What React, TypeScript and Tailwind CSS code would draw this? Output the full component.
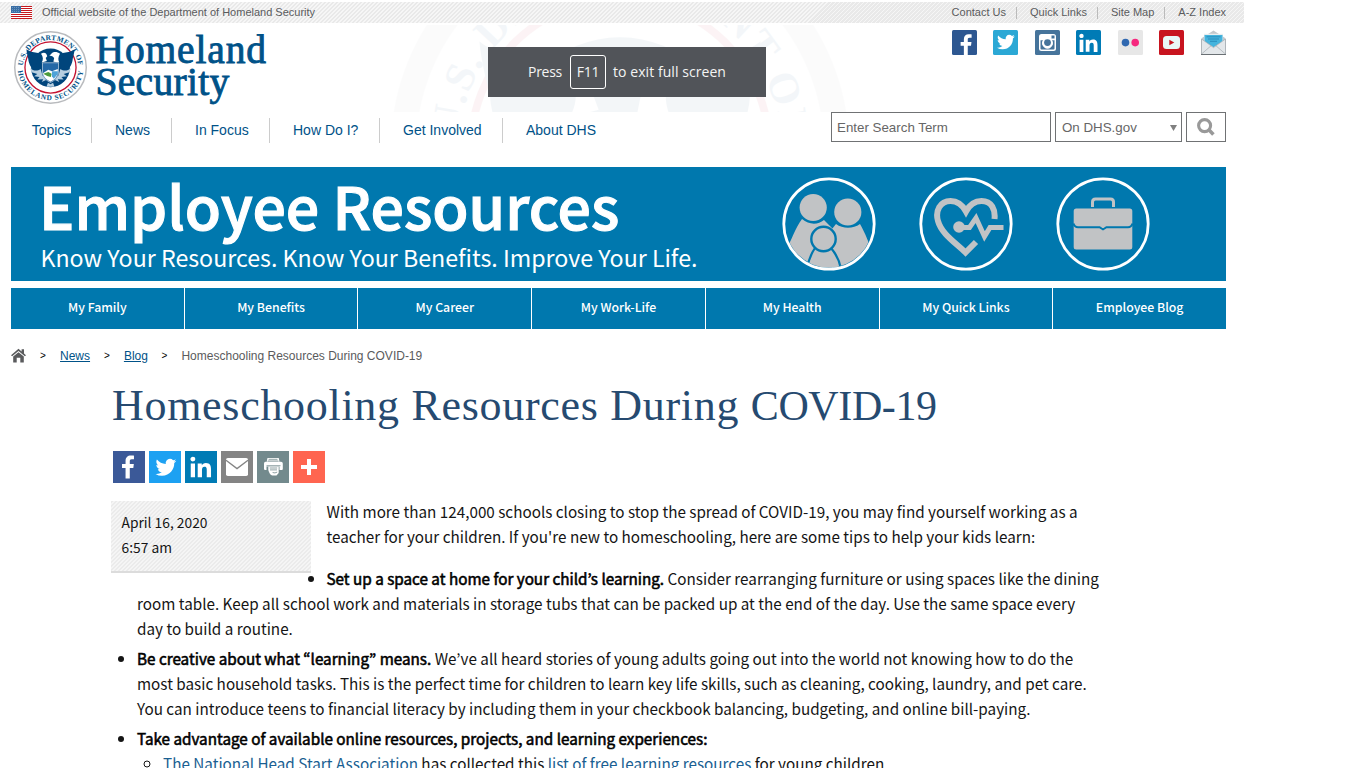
import type { ReactNode } from 'react';

function Seal({ id, ring, inner, className }: { id: string; ring: number; inner: number; className: string }) {
  return (
    <svg viewBox="-100 -100 200 200" className={className} aria-hidden="true">
      <defs>
        <path id={id + 't'} d="M-75.5 -5 A75.7 75.7 0 0 1 75.5 -5" />
        <path id={id + 'b'} d="M-89.5 9 A90 90 0 0 0 89.5 9" />
      </defs>
      <circle r={100 - ring / 2} fill="#fff" stroke="#b9bbbe" strokeWidth={ring} />
      <g transform={`scale(${inner})`}>
        <g fill="#005288" fontFamily="Liberation Serif, serif" fontWeight="700" fontSize="20">
          <text>
            <textPath href={'#' + id + 't'} textLength="226">U.S. DEPARTMENT OF</textPath>
          </text>
          <text>
            <textPath href={'#' + id + 'b'} textLength="262">HOMELAND SECURITY</textPath>
          </text>
        </g>
        <circle r="70" fill="#fff" stroke="#c41230" strokeWidth="3.6" />
        <circle cy="1" r="53" fill="#00457c" />
        <path d="M-66 -50 C-54 -41 -44 -42 -34 -40 L-40 12 C-52 4 -60 -10 -61 -24 C-63 -33 -65 -40 -66 -50Z M66 -50 C54 -41 44 -42 34 -40 L40 12 C52 4 60 -10 61 -24 C63 -33 65 -40 66 -50Z" fill="#00457c" />
        <path d="M-26 -38 C-16 -44 -10 -38 -9 -31 L-13 -26 L-10 -18 L-24 -14 C-19 -22 -20 -30 -26 -38Z M26 -38 C18 -44 6 -44 2 -37 L-3 -33 L5 -31 L10 -26 L8 -16 L24 -14 C20 -22 21 -30 26 -38Z" fill="#fff" />
        <path d="M-56 2 C-46 10 -36 10 -27 4 L-22 22 L-12 34 L-24 40 L-20 32 L-36 33 L-30 26 L-45 24 L-36 18 L-52 13Z M56 2 C46 10 36 10 27 4 L22 22 L12 34 L24 40 L20 32 L36 33 L30 26 L45 24 L36 18 L52 13Z" fill="#b7cfe0" />
        <path d="M-7 42 L0 46 L7 42 L11 53 H-11Z" fill="#b7cfe0" />
        <path d="M-22 -13 H22 V14 C21 29 9 37 0 41 C-9 37 -21 29 -22 14Z" fill="#2468a6" stroke="#fff" strokeWidth="1.5" />
        <path d="M-21 16 L-6 6 L4 10 L20 4 V14 C18 28 9 35 0 39 C-9 35 -18 28 -21 16Z" fill="#fff" />
        <path d="M-20 17 L-6 12 L3 17 L1 26 L-9 23Z" fill="#4c9b3b" />
        <path d="M4 10 H20 V18 L9 31 L4 24Z" fill="#4ea3d8" />
      </g>
    </svg>
  );
}

function Flag() {
  return (
    <svg viewBox="0 0 21 13" className="h-[13px] w-[21px]" shapeRendering="crispEdges" aria-hidden="true">
      <rect width="21" height="13" fill="#fff" />
      {[0, 2, 4, 6, 8, 10, 12].map((y) => (
        <rect key={y} y={y} width="21" height="1" fill="#c5161d" />
      ))}
      <rect width="10" height="7" fill="#3a6ea5" />
      <path d="M1 1.5h8M1 3.5h8M1 5.5h8" stroke="#6f97bd" strokeDasharray="1 1" />
    </svg>
  );
}

const F_PATH = 'M17.78 27.5V17.008h3.522l.527-4.09h-4.05v-2.61c0-1.182.33-1.99 2.023-1.99h2.166V4.66c-.375-.05-1.66-.16-3.155-.16-3.123 0-5.26 1.905-5.26 5.405v3.016h-3.53v4.09h3.53V27.5h4.223z';
const T_PATH = 'M28 8.557a9.913 9.913 0 0 1-2.828.775 4.93 4.93 0 0 0 2.166-2.725 9.738 9.738 0 0 1-3.13 1.194 4.92 4.92 0 0 0-3.593-1.55 4.924 4.924 0 0 0-4.794 6.049c-4.09-.21-7.72-2.17-10.15-5.15a4.942 4.942 0 0 0-.665 2.477c0 1.71.87 3.214 2.19 4.1a4.968 4.968 0 0 1-2.23-.616v.06c0 2.39 1.7 4.38 3.952 4.83-.414.115-.85.174-1.297.174-.318 0-.626-.03-.928-.086a4.935 4.935 0 0 0 4.6 3.42 9.893 9.893 0 0 1-6.114 2.107c-.398 0-.79-.023-1.175-.068a13.953 13.953 0 0 0 7.55 2.213c9.056 0 14.01-7.507 14.01-14.013 0-.213-.005-.426-.015-.637.96-.695 1.795-1.56 2.455-2.55z';
const IN_PATH = 'M6.227 12.61h4.19v13.48h-4.19V12.61zm2.095-6.7a2.43 2.43 0 0 1 0 4.86c-1.344 0-2.428-1.09-2.428-2.43s1.084-2.43 2.428-2.43m4.72 6.7h4.02v1.84h.058c.56-1.058 1.927-2.176 3.965-2.176 4.238 0 5.02 2.792 5.02 6.42v7.395h-4.183v-6.56c0-1.564-.03-3.574-2.178-3.574-2.18 0-2.514 1.7-2.514 3.46v6.668h-4.187V12.61z';

const social: { name: string; bg: string; art: ReactNode }[] = [
  { name: 'Facebook', bg: '#2d5791', art: <path transform="translate(-.6 .2) scale(.92)" d={F_PATH} fill="#fff" /> },
  { name: 'Twitter', bg: '#2ba8d5', art: <path transform="translate(1 .2) scale(.74)" d={T_PATH} fill="#fff" /> },
  {
    name: 'Instagram',
    bg: '#46749b',
    art: (
      <>
        <rect x="4" y="4" width="17" height="17" rx="2.5" fill="#fff" />
        <rect x="16.5" y="5.5" width="3" height="3" fill="#46749b" />
        <path d="M5.5 10.2h2.6a5.3 5.3 0 1 0 8.8 0h2.6v8.3a1 1 0 0 1-1 1h-12a1 1 0 0 1-1-1z" fill="#46749b" />
        <circle cx="12.5" cy="12.6" r="5.2" fill="#fff" />
        <circle cx="12.5" cy="12.6" r="3.4" fill="#46749b" />
      </>
    ),
  },
  { name: 'LinkedIn', bg: '#007bb6', art: <path transform="translate(-2 -1.6) scale(.9)" d={IN_PATH} fill="#fff" /> },
  {
    name: 'Flickr',
    bg: '#e7e7e7',
    art: (
      <>
        <circle cx="7.5" cy="12.6" r="3.8" fill="#3068b0" />
        <circle cx="17.2" cy="12.6" r="3.8" fill="#f6287e" />
      </>
    ),
  },
  {
    name: 'YouTube',
    bg: '#c8141f',
    art: (
      <>
        <rect x="4" y="6" width="17" height="13" rx="3.5" fill="#e9f6f6" />
        <path d="M10.3 9.8v5.4l5-2.7z" fill="#c8141f" />
      </>
    ),
  },
];

function MailIcon() {
  return (
    <svg viewBox="0 0 25 25" className="h-[25px] w-[25px]" aria-hidden="true">
      <path d="M.5 8.2 L12.5 .4 L24.5 8.2 V24.5 H.5Z" fill="#c3c8cc" />
      <path d="M3 3.8 H22 V13 H3Z" fill="#e9edef" />
      <path d="M3.5 5 H21.5 V11.5 L12.5 17.2 L3.5 11.5Z" fill="#45b4dd" />
      <path d="M5.5 6.8h14M7 9h11M9 11.3h7" stroke="#2383b4" strokeWidth=".8" />
      <path d="M.5 9 L12.5 17.6 L24.5 9 V24.2 H.5Z" fill="#e3e7ea" />
      <path d="M.8 23.8 L10 15.8 M24.2 23.8 L15 15.8 M.8 9.2 L12.5 17.6 L24.2 9.2" stroke="#a4abb0" strokeWidth=".7" fill="none" />
      <path d="M.4 9v15.4M24.6 9v15.4" stroke="#9aa2a8" strokeWidth=".8" />
      <path d="M0 24.5h25" stroke="#6a7074" />
    </svg>
  );
}

const share: { name: string; bg: string; art: ReactNode }[] = [
  { name: 'Facebook', bg: '#3b5998', art: <path transform="translate(-1 0)" d={F_PATH} fill="#fff" /> },
  { name: 'Twitter', bg: '#1da1f2', art: <path transform="translate(3 2.4) scale(.87)" d={T_PATH} fill="#fff" /> },
  { name: 'LinkedIn', bg: '#007bb5', art: <path transform="translate(-.6 -.4) scale(1.02)" d={IN_PATH} fill="#fff" /> },
  {
    name: 'Email',
    bg: '#848484',
    art: (
      <>
        <rect x="5" y="7" width="22" height="18" rx="1.8" fill="#fff" />
        <path d="M5 9.2 L16 17.6 L27 9.2" stroke="#848484" strokeWidth="1.3" fill="none" />
      </>
    ),
  },
  {
    name: 'Print',
    bg: '#738a8d',
    art: (
      <>
        <path d="M10.5 7h11.2l.8 3.6h-12.8z M7 12.4q0-1.6 1.6-1.6h15.4q1.8 0 1.8 1.6v5.6q0 1-1 1h-2.3v-3.4h-13v3.4H8.2q-1.2 0-1.2-1z" fill="#fff" />
        <path d="M11.6 8.3h8.9M10.8 10h10.6" stroke="#738a8d" strokeWidth=".8" />
        <path d="M11.3 15.5h10.4v6.4l-2.2 2.6h-4.2q-2.6-.3-4-5.4z" fill="#fff" />
        <path d="M9.5 14.7h14M12.8 17h7.4M13 18.9h7M15.6 21.5q2.4 1 4.6-.4" stroke="#738a8d" strokeWidth=".8" fill="none" />
      </>
    ),
  },
  { name: 'More', bg: '#ff6550', art: <path d="M14 8h4v6h6v4h-6v6h-4v-6H8v-4h6z" fill="#fff" /> },
];

function FamilyIcon() {
  return (
    <svg viewBox="-47 -47 94 94" className="h-[94px] w-[94px]" aria-hidden="true">
      <defs>
        <clipPath id="fam">
          <circle r="43.5" />
        </clipPath>
      </defs>
      <g clipPath="url(#fam)" fill="#c1c3c5">
        <path d="M-27 -5 C-20 1 -11 1 -5 -4 L4 5 V50 H-45 V30 C-38 18 -34 4 -27 -5Z" />
        <path d="M7 0 C14 5 24 5 31 0 C36 9 42 22 44 34 V50 H3 V5Z" />
        <path d="M-22 46 C-21 37 -18 30 -14 24 H2 C7 30 11 37 12 46Z" stroke="#0078ae" strokeWidth="2.2" />
      </g>
      <g fill="#c1c3c5">
        <circle cx="-15.8" cy="-16.5" r="13.6" />
        <circle cx="18.8" cy="-12" r="13.6" />
        <circle cx="-5.5" cy="15" r="12.2" stroke="#0078ae" strokeWidth="2.4" />
      </g>
      <circle r="45.2" fill="none" stroke="#fff" strokeWidth="2.8" />
    </svg>
  );
}

function HeartIcon() {
  return (
    <svg viewBox="-47 -47 94 94" className="h-[94px] w-[94px]" aria-hidden="true">
      <g fill="none" stroke="#c1c3c5" strokeWidth="6">
        <path d="M28.5 -5 C29.5 -14 26 -23 15.5 -23 C8 -23 3.5 -19 0 -12.5 C-3.5 -19 -8 -23 -15.5 -23 C-26 -23 -31 -13 -28 -3 C-24.5 10 -10 19 -.5 28.5 L10 18" />
        <path d="M-7 3.5 H3.5 L10 -6 L18.5 12.5 L24 3.5 H37.5" strokeWidth="5" />
      </g>
      <circle cx="-7" cy="3" r="5.8" fill="#c1c3c5" />
      <circle r="45.2" fill="none" stroke="#fff" strokeWidth="2.8" />
    </svg>
  );
}

function BriefcaseIcon() {
  return (
    <svg viewBox="-47 -47 94 94" className="h-[94px] w-[94px]" aria-hidden="true">
      <path d="M-10.5 -17 V-22 Q-10.5 -25 -7.5 -25 H7.5 Q10.5 -25 10.5 -22 V-17" fill="none" stroke="#c1c3c5" strokeWidth="3" />
      <rect x="-29.3" y="-15.5" width="58.6" height="41" rx="2.5" fill="#c1c3c5" />
      <path d="M-29.5 -.5 Q-28.5 3.2 -25 3.2 H-3.5 L0 5.4 L3.5 3.2 H25 Q28.5 3.2 29.5 -.5" fill="none" stroke="#0078ae" strokeWidth="2" />
      <path d="M-2 2.6h4L0 4.2z" fill="#c1c3c5" />
      <circle r="45.2" fill="none" stroke="#fff" strokeWidth="2.8" />
    </svg>
  );
}

function Strong({ children }: { children: ReactNode }) {
  return <strong className="font-normal text-black [-webkit-text-stroke:0.55px_#000]">{children}</strong>;
}

const STRIPE = 'bg-[repeating-linear-gradient(135deg,#e9e9e9_0px,#e9e9e9_1.8px,#f6f6f6_1.8px,#f6f6f6_2.83px)]';
const STRIPE_SOFT = 'bg-[repeating-linear-gradient(135deg,#ebebeb_0px,#ebebeb_1.6px,#f5f5f5_1.6px,#f5f5f5_2.83px)]';
const NAV_ITEM = 'flex h-full items-center border-r border-[#ccc] pl-[23px]';
const TAB = 'bg-[#0078ae] text-center';

export default function App() {
  return (
    <div className="h-[768px] w-[1366px] overflow-hidden whitespace-nowrap bg-white font-['Liberation_Sans',Arial,sans-serif] text-black">
      <div className="relative w-[1244px] pt-[2px]">
        <div className={'flex h-[21px] items-center justify-between pl-[11px] pr-[18px] text-[11px] text-[#5a5b5d] ' + STRIPE}>
          <div className="flex items-center gap-[10px]">
            <Flag />
            <span>Official website of the Department of Homeland Security</span>
          </div>
          <div className="flex items-center">
            <span>Contact Us</span>
            <span className="ml-[10px] mr-[13px] h-3 w-px bg-[#bbb]" />
            <span>Quick Links</span>
            <span className="ml-[10px] mr-[13px] h-3 w-px bg-[#bbb]" />
            <span>Site Map</span>
            <span className="ml-[10px] mr-[13px] h-3 w-px bg-[#bbb]" />
            <span>A-Z Index</span>
          </div>
        </div>
        <div className="absolute left-[391px] top-[25px] h-[87px] w-[458px] overflow-hidden opacity-[0.045]">
          <Seal id="wm" ring={11} inner={0.93} className="-mt-[106px] h-[458px] w-[458px]" />
        </div>

        <header className="relative">
          <div className="flex h-[89px] justify-between pl-[13.5px] pr-[18px]">
            <div className="flex">
              <Seal id="lg" ring={4} inner={1} className="mt-[7.5px] h-[73px] w-[73px]" />
              <div className="ml-[9px] mt-[11px] font-['Liberation_Serif',serif] text-[39.5px] leading-[32px] text-[#005288] [-webkit-text-stroke:0.9px_#005288]">
                <div className="tracking-[0.85px]">Homeland</div>
                <div className="tracking-[0.3px]">Security</div>
              </div>
            </div>
            <div className="mt-[7px] flex gap-[16.55px]">
              {social.map((s) => (
                <svg key={s.name} viewBox="0 0 25 25" className="h-[25px] w-[25px]" role="img" aria-label={s.name}>
                  <rect width="25" height="25" rx="1.5" fill={s.bg} />
                  {s.art}
                </svg>
              ))}
              <MailIcon />
            </div>
          </div>
          <div className="flex h-8 justify-between pl-[11px] pr-[18px]">
            <nav className="mt-[6px] flex h-[25px] items-center text-[14px] text-[#005288]">
              <div className="flex h-full w-[81px] items-center border-r border-[#ccc] pl-[20.7px]">Topics</div>
              <div className={NAV_ITEM + ' w-[80px]'}>News</div>
              <div className={NAV_ITEM + ' w-[98px]'}>In Focus</div>
              <div className={NAV_ITEM + ' w-[110px]'}>How Do I?</div>
              <div className={NAV_ITEM + ' w-[123px]'}>Get Involved</div>
              <div className="flex h-full items-center pl-[23px]">About DHS</div>
            </nav>
            <div className="flex h-[30px] gap-1 text-[13.33px] text-[#666]">
              <div className="flex w-[220px] items-center border border-[#707274] bg-white pl-[5px] pt-px">Enter Search Term</div>
              <div className="flex w-[127px] items-center justify-between border border-[#707274] bg-white pl-[6px] pr-[4px] pt-px">
                <span>On DHS.gov</span>
                <svg viewBox="0 0 7 6" className="h-[6px] w-[7px]"><path d="M0 0h7L3.5 6z" fill="#808080" /></svg>
              </div>
              <div className="flex w-10 items-center justify-center border border-[#707274] bg-white">
                <svg viewBox="0 0 18 18" className="h-[18px] w-[18px]"><circle cx="7.6" cy="7.6" r="6" fill="none" stroke="#999" strokeWidth="3.1" /><path d="M11.6 11.6L16.4 16.4" stroke="#999" strokeWidth="3.6" /></svg>
              </div>
            </div>
          </div>
        </header>

        <div className="ml-[11px] mt-[23px] w-[1215px] font-['Noto_Sans_CJK_KR',sans-serif] text-white">
          <div className="flex h-[114px] bg-[#0078ae]">
            <div className="w-[771px] pl-[28px]">
              <div className="h-[73px] text-[59px] font-medium leading-[76px] [-webkit-text-stroke:1.1px_#fff]">Employee Resources</div>
              <div className="pl-[1.5px] text-[23.2px] leading-[34px]">Know Your Resources. Know Your Benefits. Improve Your Life.</div>
            </div>
            <div className="flex items-center gap-[43px]">
              <FamilyIcon />
              <HeartIcon />
              <BriefcaseIcon />
            </div>
          </div>
          <nav className="mt-[7px] grid h-[41px] grid-cols-7 gap-px text-[12.3px] font-medium leading-[38px]">
            <div className={TAB}>My Family</div>
            <div className={TAB}>My Benefits</div>
            <div className={TAB}>My Career</div>
            <div className={TAB}>My Work-Life</div>
            <div className={TAB}>My Health</div>
            <div className={TAB}>My Quick Links</div>
            <div className={TAB}>Employee Blog</div>
          </nav>
        </div>

        <div className="ml-[11px] mt-[18px] flex h-[17px] items-center text-[12px] text-[#5a5b5d]">
          <svg viewBox="0 0 15 15" className="h-[15px] w-[15px]"><path d="M0 7.2L7.5 .8L10.6 3.4V1.2H13V5.5L15 7.2L13.9 8.3L7.5 2.9L1.1 8.3Z M2.2 8.6L7.5 4.2L12.8 8.6V14.5H9.3V9.8H5.7V14.5H2.2Z" fill="#5a5b5d" /></svg>
          <span className="ml-[14px] text-[10px] text-black">&gt;</span>
          <span className="ml-[14.2px] text-[#005288] underline">News</span>
          <span className="ml-[14px] text-[10px] text-black">&gt;</span>
          <span className="ml-[14px] text-[#005288] underline">Blog</span>
          <span className="ml-[13.7px] text-[10px] text-black">&gt;</span>
          <span className="ml-[14px]">Homeschooling Resources During COVID-19</span>
        </div>

        <main className="ml-[111px] w-[1000px]">
          <h1 className="mt-[14px] h-[60px] pl-px font-['Liberation_Serif',serif] text-[44px] leading-[56px] tracking-[0.7px] text-[#264a70]">
            Homeschooling Resources During <span className="text-[42px] tracking-[-0.4px]">COVID-19</span>
          </h1>
          <div className="ml-[2px] mt-[13px] flex gap-1">
            {share.map((s) => (
              <svg key={s.name} viewBox="0 0 32 32" className="h-8 w-8" role="img" aria-label={s.name}>
                <rect width="32" height="32" fill={s.bg} />
                {s.art}
              </svg>
            ))}
          </div>
          <article className="mt-[16px] font-['Noto_Sans_CJK_KR',sans-serif] text-[15.26px] leading-[25px] text-[#151515]">
            <aside className={'float-left mr-[15.5px] mt-[2px] h-[72px] w-[200px] border-b-2 border-[#dcdcdc] pl-[10.5px] pt-[9px] text-[13.8px] ' + STRIPE_SOFT}>
              <div>April 16, 2020</div>
              <div>6:57 am</div>
            </aside>
            <p className="mb-[17px]">
              With more than 124,000 schools closing to stop the spread of COVID-19, you may find yourself working as a
              <br />
              teacher for your children. If you're new to homeschooling, here are some tips to help your kids learn:
            </p>
            <ul className="list-disc pl-[26px]">
              <li className="mb-[5px]">
                <Strong>Set up a space at home for your child’s learning.</Strong> Consider rearranging furniture or using spaces like the dining
                <br />
                room table. Keep all school work and materials in storage tubs that can be packed up at the end of the day. Use the same space every
                <br />
                day to build a routine.
              </li>
              <li className="mb-[5px]">
                <Strong>Be creative about what “learning” means.</Strong> We’ve all heard stories of young adults going out into the world not knowing how to do the
                <br />
                most basic household tasks. This is the perfect time for children to learn key life skills, such as cleaning, cooking, laundry, and pet care.
                <br />
                You can introduce teens to financial literacy by including them in your checkbook balancing, budgeting, and online bill-paying.
              </li>
              <li>
                <Strong>Take advantage of available online resources, projects, and learning experiences:</Strong>
                <ul className="list-[circle] pl-[26px]">
                  <li>
                    <a className="text-[#1a5f92]">The National Head Start Association</a> has collected this <a className="text-[#1a5f92]">list of free learning resources</a> for young children
                  </li>
                </ul>
              </li>
            </ul>
          </article>
        </main>
        <div className="absolute left-[488px] top-[47px] flex h-[50px] w-[278px] items-center justify-center bg-[#484b50]/95 pb-px font-['Open_Sans',sans-serif] text-[14px] text-[#f4f4f4]">
          <span className="tracking-[-0.27px]">Press</span>
          <span className="ml-2 mr-[7px] mt-px flex h-[34px] w-9 items-center justify-center rounded-[3px] border border-white pb-px tracking-[-0.3px]">F11</span>
          <span className="tracking-[0.06px]">to exit full screen</span>
        </div>
      </div>
    </div>
  );
}
